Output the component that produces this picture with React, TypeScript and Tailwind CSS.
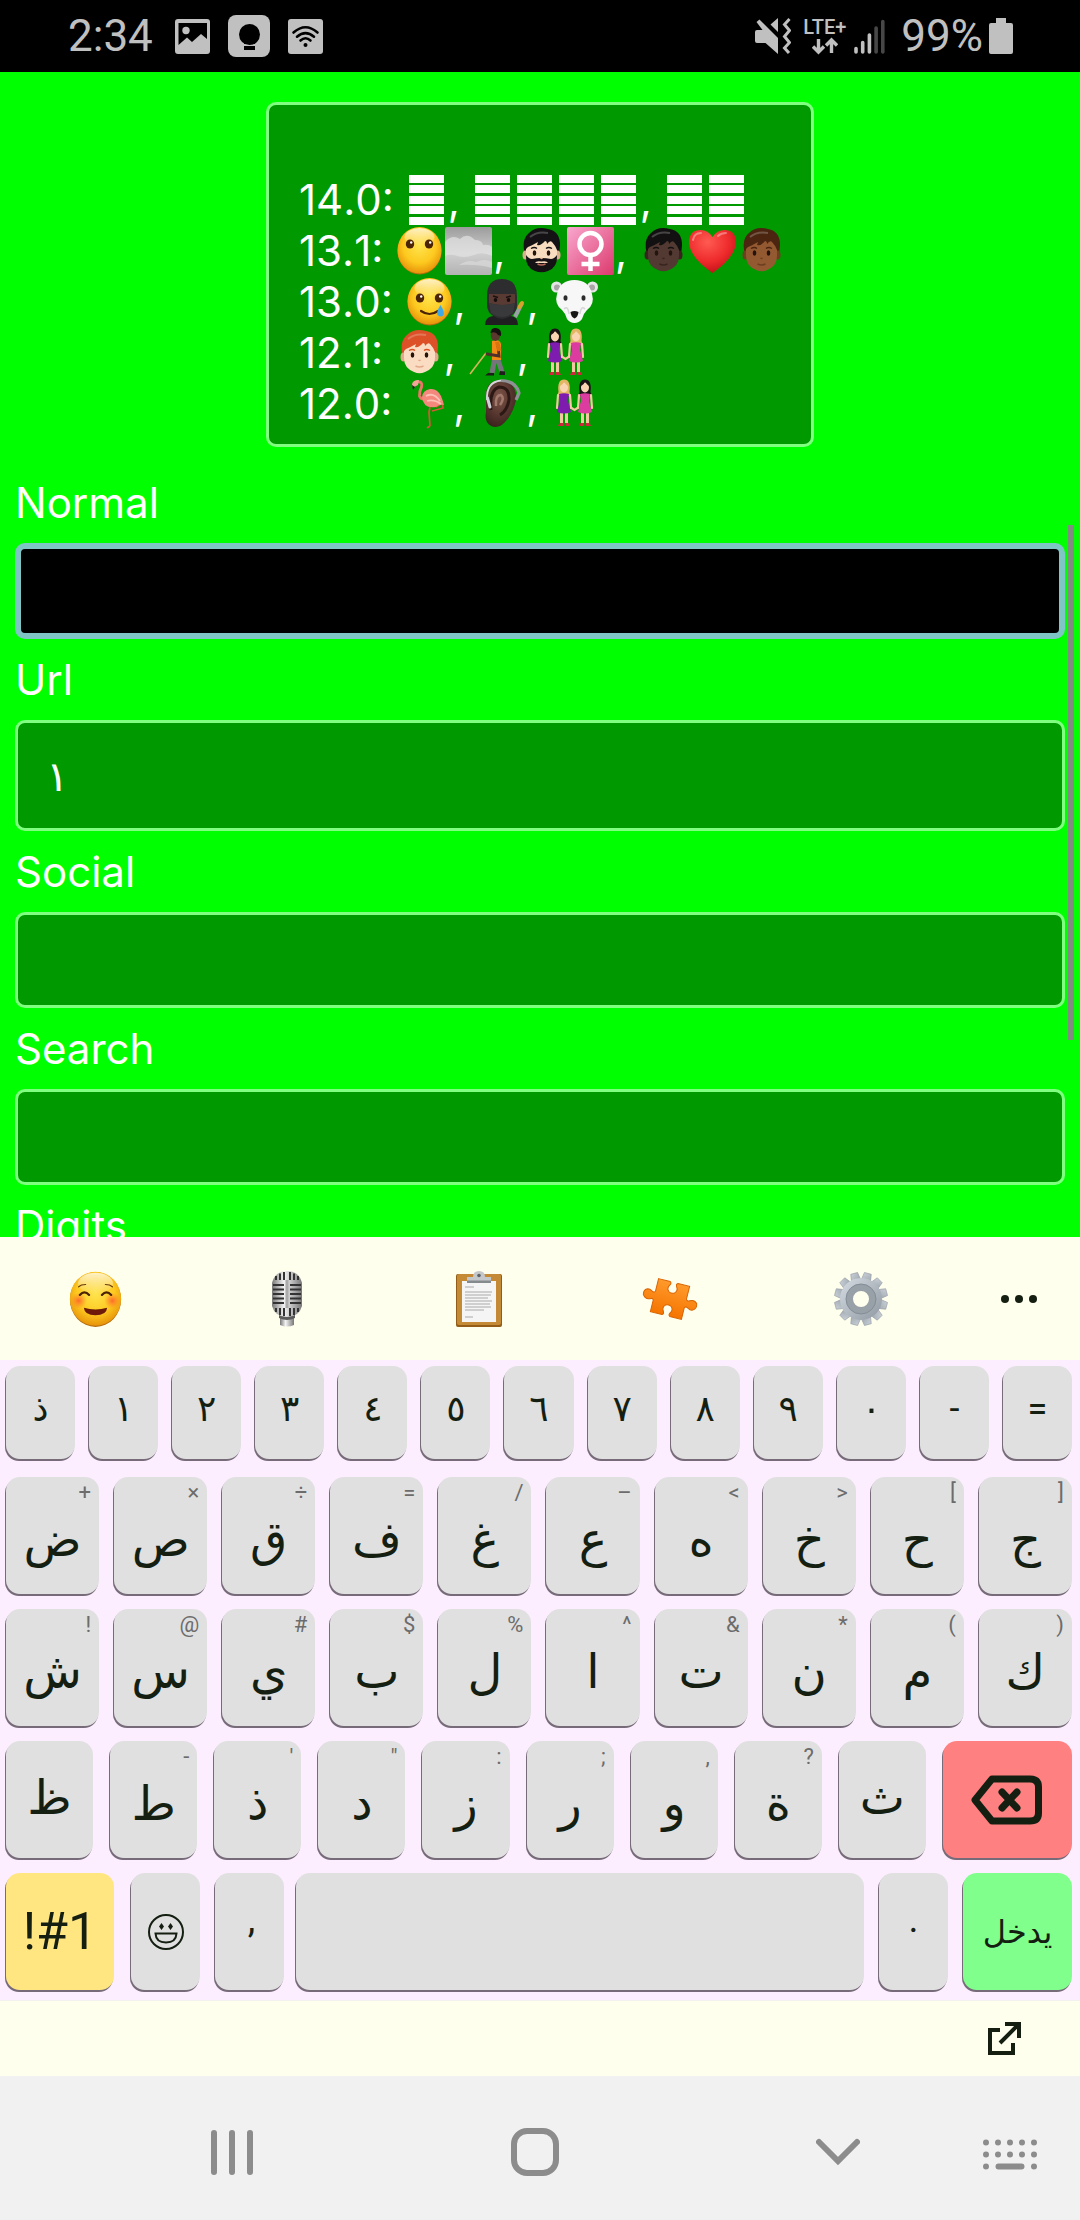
import React from "react";

const INK = "#141f12";

/* ---------- status bar ---------- */

function StatusBar() {
  return (
    <header className="flex h-[72px] shrink-0 items-center bg-black pr-[67px] pl-[68px] font-[Roboto,sans-serif] text-[44px] leading-[44px] text-[#c0c0c0]">
      <span>2:34</span>
      <div className="ml-[22px] flex items-center gap-[18px]">
        <svg className="h-[35px] w-[35px]" viewBox="0 0 35 35" aria-label="Picture">
          <path fill="currentColor" fillRule="evenodd" d="M3 0H32a3 3 0 0 1 3 3V32a3 3 0 0 1-3 3H3a3 3 0 0 1-3-3V3a3 3 0 0 1 3-3ZM3.500 4V26L12 18.500L17 23L26 15L32 20V4Z" />
          <circle cx="11" cy="11.500" r="3.700" fill="currentColor" />
        </svg>
        <svg className="h-[42px] w-[42px]" viewBox="0 0 42 42" aria-label="Bulb">
          <rect width="42" height="42" rx="8" fill="currentColor" />
          <circle cx="21.500" cy="19.500" r="10.500" fill="#000" />
          <path d="M16 27H27V29H16ZM16 31H27V35H16Z" fill="#000" />
        </svg>
        <svg className="h-[35px] w-[35px]" viewBox="0 0 35 35" aria-label="Wi-Fi">
          <rect width="35" height="35" rx="3" fill="currentColor" />
          <g fill="none" stroke="#000" strokeWidth="2.600" strokeLinecap="round">
            <path d="M5.500 13.500Q17.500 3 29.500 13.500" />
            <path d="M9 17.700Q17.500 10.500 26 17.700" />
            <path d="M12.500 21.500Q17.500 17 22.500 21.500" />
          </g>
          <circle cx="17.500" cy="26" r="2" fill="#000" />
        </svg>
      </div>
      <div className="ml-auto flex items-center">
        <svg className="h-9 w-9" viewBox="0 0 36 36" aria-label="Vibrate">
          <path d="M2 12H7.500L1.500 4L4.500 1.500L23 20V36L10.500 25H2a2 2 0 0 1-2-2V14a2 2 0 0 1 2-2ZM23 0V14L15.500 6.500Z" fill="currentColor" />
          <path d="M34.500 1L29.500 6.500L34.500 12.500L29.500 18.500L34.500 24.500L29.500 30L34 35" fill="none" stroke="currentColor" strokeWidth="3" />
        </svg>
        <div className="ml-3 flex flex-col items-center">
          <span className="text-xl leading-5 font-medium">LTE+</span>
          <svg className="h-[18px] w-[26px]" viewBox="0 0 26 18" aria-hidden="true">
            <path d="M6.500 2V15M1 9.500L6.500 15L12 9.500M19.500 16V3M14 8.500L19.500 3L25 8.500" fill="none" stroke="currentColor" strokeWidth="3.400" />
          </svg>
        </div>
        <svg className="ml-2 h-9 w-[31px]" viewBox="0 0 31 36" aria-label="Signal">
          <g stroke="currentColor" strokeWidth="3.600" strokeLinecap="round">
            <path d="M2 30.500V34M8.700 24.500V34M15.400 17V34" />
            <path d="M22.100 10V34M28.800 3.500V34" stroke="#474747" />
          </g>
        </svg>
        <span className="ml-4">99%</span>
        <svg className="ml-[6px] h-9 w-6" viewBox="0 0 24 36" aria-label="Battery">
          <path d="M7 0H17V5H22a2 2 0 0 1 2 2V34a2 2 0 0 1-2 2H2a2 2 0 0 1-2-2V7A2 2 0 0 1 2 5H7Z" fill="currentColor" />
        </svg>
      </div>
    </header>
  );
}

/* ---------- emoji drawings ---------- */

function Emoji({ label, children }: { label: string; children: React.ReactNode }) {
  return (
    <svg role="img" aria-label={label} className="h-[51px] w-[49px] shrink-0" viewBox="0 0 49 51">
      {children}
    </svg>
  );
}

function Defs() {
  return (
    <svg className="absolute h-0 w-0" aria-hidden="true">
      <defs>
        <radialGradient id="yellow" cx="50%" cy="40%" r="62%">
          <stop offset="0" stopColor="#ffe44f" />
          <stop offset="0.600" stopColor="#fdc91f" />
          <stop offset="1" stopColor="#e58e08" />
        </radialGradient>
        <linearGradient id="gloss" x1="0" y1="0" x2="0" y2="1">
          <stop offset="0" stopColor="#fff" stopOpacity="0.750" />
          <stop offset="1" stopColor="#fff" stopOpacity="0" />
        </linearGradient>
        <radialGradient id="cheek">
          <stop offset="0" stopColor="#ff5a2e" stopOpacity="0.850" />
          <stop offset="1" stopColor="#ff7a2e" stopOpacity="0" />
        </radialGradient>
        <linearGradient id="sky" x1="0" y1="0" x2="0" y2="1">
          <stop offset="0" stopColor="#9c9c9c" />
          <stop offset="0.550" stopColor="#cfcfcf" />
          <stop offset="1" stopColor="#b3b3b3" />
        </linearGradient>
        <linearGradient id="pink" x1="0" y1="0" x2="1" y2="1">
          <stop offset="0" stopColor="#f9a8cf" />
          <stop offset="1" stopColor="#dc3a6d" />
        </linearGradient>
        <radialGradient id="heart" cx="40%" cy="28%" r="75%">
          <stop offset="0" stopColor="#ff5b52" />
          <stop offset="0.600" stopColor="#ee2b2c" />
          <stop offset="1" stopColor="#c21019" />
        </radialGradient>
        <linearGradient id="steel" x1="0" y1="0" x2="1" y2="0">
          <stop offset="0" stopColor="#777" />
          <stop offset="0.400" stopColor="#f4f4f4" />
          <stop offset="1" stopColor="#777" />
        </linearGradient>
        <linearGradient id="orange" x1="0" y1="0" x2="0" y2="1">
          <stop offset="0" stopColor="#ff9a2b" />
          <stop offset="1" stopColor="#f57400" />
        </linearGradient>
        <linearGradient id="gear" x1="0" y1="0" x2="1" y2="1">
          <stop offset="0" stopColor="#ccd3da" />
          <stop offset="1" stopColor="#99a1aa" />
        </linearGradient>
        <radialGradient id="ear" cx="45%" cy="35%" r="65%">
          <stop offset="0" stopColor="#7d5348" />
          <stop offset="1" stopColor="#3d241f" />
        </radialGradient>
      </defs>
    </svg>
  );
}

function Ball() {
  return (
    <>
      <ellipse cx="24.500" cy="26" rx="22" ry="23.500" fill="#b46c0c" />
      <ellipse cx="24.500" cy="25.300" rx="22" ry="23.300" fill="url(#yellow)" />
      <ellipse cx="24.500" cy="12" rx="15" ry="9" fill="url(#gloss)" />
    </>
  );
}

function Eyes({ y }: { y: number }) {
  return (
    <>
      <ellipse cx="15" cy={y} rx="4.200" ry="4.500" fill="#4b2405" />
      <ellipse cx="34" cy={y} rx="4.200" ry="4.500" fill="#4b2405" />
      <circle cx="16.200" cy={y - 1.500} r="1.200" fill="#fff" />
      <circle cx="35.200" cy={y - 1.500} r="1.200" fill="#fff" />
    </>
  );
}

function Head({ label, skin, shade, hair, beard }: { label: string; skin: string; shade: string; hair: string; beard?: boolean }) {
  return (
    <Emoji label={label}>
      <path d="M8 30Q4 14 12 8Q19 1 31 4Q43 6 43 20Q43 26 41 31Z" fill={hair} />
      <ellipse cx="8.500" cy="30" rx="3" ry="4.500" fill={shade} />
      <ellipse cx="40.500" cy="30" rx="3" ry="4.500" fill={shade} />
      <path d="M9 22Q9 14 24.500 14Q40 14 40 22V31Q40 41 30 45Q24.500 47.500 19 45Q9 41 9 31Z" fill={skin} />
      {beard && (
        <path d="M9 30Q12 34 15 34Q24.500 32 34 34Q37 34 40 30Q41 42 31 46Q24.500 48.500 18 46Q8 42 9 30ZM18 38H31Q30 35.500 24.500 36.500Q19 35.500 18 38Z" fillRule="evenodd" fill={hair} />
      )}
      <path d="M8 25Q6 9 22 6Q39 4 42 17L40 25Q38 20 35 17Q33 15 30 19Q30 16 28 16Q24 21 20 20L21 17Q14 21 11 22Z" fill={hair} />
      <path d="M13 12Q20 6 31 8" stroke="#fff" strokeOpacity="0.220" strokeWidth="2" fill="none" />
      <ellipse cx="17.500" cy="28" rx="1.800" ry="2.800" fill="#24140e" />
      <ellipse cx="31.500" cy="28" rx="1.800" ry="2.800" fill="#24140e" />
      <path d="M14 23.500Q17.500 21.500 20 23.500M29 23.500Q31.500 21.500 35 23.500" stroke={hair} strokeWidth="1.300" fill="none" />
      <path d="M23.500 33Q24.500 34 25.500 33" stroke={shade} strokeWidth="1.300" fill="none" />
      <path d="M20.500 39Q24.500 41 28.500 39" stroke={beard ? "#b56a5c" : shade} strokeWidth="1.500" fill="none" />
    </Emoji>
  );
}

function Tofu() {
  return (
    <svg role="img" aria-label="Unsupported emoji" className="h-[51px] w-[42px] shrink-0" viewBox="0 0 42 51">
      <path d="M3 1H38V9H3ZM3 11H38V19H3ZM3 22H38V30H3ZM3 32H38V40H3ZM3 43H38V51H3Z" fill="#fff" />
    </svg>
  );
}

function Woman({ x, hair, dress }: { x: number; hair: string; dress: string }) {
  return (
    <g transform={`translate(${x} 0)`}>
      <path d="M-5.500 14Q-7 1.500 0 1.500Q7 1.500 5.500 14L7 18H-7Z" fill={hair} />
      <path d="M-6 17L-7 30M6 17L7 30" stroke="#f2c9a0" strokeWidth="2.200" strokeLinecap="round" />
      <path d="M-2.500 33V46M2.500 33V46" stroke="#f2c9a0" strokeWidth="3" />
      <ellipse cx="0" cy="9.500" rx="4" ry="5" fill="#f8d5b0" />
      <path d="M-4 8Q-1 7 0 3.500Q2 7 4 8Q4 3 0 3Q-4 3 -4 8Z" fill={hair} />
      <path d="M-5 16Q0 14.500 5 16L4 23L7 34Q0 37 -7 34L-4 23Z" fill={dress} />
      <path d="M-4.500 45H-1V48H-6ZM1 45H4.500L6 48H1Z" fill="#d3263c" />
    </g>
  );
}

function Couple({ swapped }: { swapped?: boolean }) {
  return (
    <Emoji label="Two women holding hands">
      <path d="M20 29L24.500 32L29 29" stroke="#f2c9a0" strokeWidth="2.200" fill="none" />
      <Woman x={14} hair={swapped ? "#e3b565" : "#191317"} dress="#7d1cae" />
      <Woman x={35} hair={swapped ? "#191317" : "#e3b565"} dress="#dc3ba0" />
    </Emoji>
  );
}

const faceNoMouth = (
  <Emoji label="Face without mouth">
    <Ball />
    <Eyes y={19} />
  </Emoji>
);

const fog = (
  <Emoji label="Fog">
    <rect x="1" y="2" width="47" height="48" rx="2" fill="url(#sky)" />
    <path d="M1 17Q8 9 16 14Q23 7 31 15Q38 15 39 20Q45 19 48 22V31Q38 26 30 30Q20 34 10 30Q5 29 1 31Z" fill="#e3e3e3" fillOpacity="0.700" />
    <path d="M15 40Q24 34 32 37Q41 33 48 37V43Q34 39 15 40Z" fill="#dadada" fillOpacity="0.700" />
  </Emoji>
);

const femaleSign = (
  <Emoji label="Female sign">
    <rect x="1" y="2" width="47" height="48" rx="2" fill="url(#pink)" />
    <ellipse cx="24.500" cy="19" rx="11" ry="11" fill="none" stroke="#fff" strokeWidth="4.500" />
    <path d="M24.500 30V46M15.500 39H33.500" stroke="#fff" strokeWidth="4.500" />
  </Emoji>
);

const heart = (
  <Emoji label="Red heart">
    <path d="M24.500 48Q1 32 1 16Q2 5 12.500 5Q20 5 24.500 12Q29 5 36.500 5Q47 5 48 16Q48 32 24.500 48Z" fill="url(#heart)" />
    <path d="M5 15Q6 8 13 8M30 11Q33 8 38 8" stroke="#fff" strokeOpacity="0.350" strokeWidth="2" fill="none" strokeLinecap="round" />
  </Emoji>
);

const tearSmile = (
  <Emoji label="Smiling face with tear">
    <Ball />
    <Eyes y={22} />
    <path d="M16 35Q24.500 41 33 35" stroke="#4b2405" strokeWidth="2.200" fill="none" strokeLinecap="round" />
    <path d="M35.500 29Q40 36 38.500 39Q36 42 32.500 39Q31 36 35.500 29Z" fill="#3fa9e8" />
  </Emoji>
);

const ninja = (
  <Emoji label="Ninja">
    <path d="M38 41L45 27" stroke="#9aa0a4" strokeWidth="4" />
    <path d="M42.500 31L45 27" stroke="#d6a22a" strokeWidth="4" strokeLinecap="round" />
    <path d="M8 49Q8 41 16 40H34Q41 41 41 49Z" fill="#1f1f21" />
    <path d="M10 20Q10 3 25 3Q40 3 40 20V31Q38 41 25 43Q12 41 10 31Z" fill="#2d2d30" />
    <path d="M12 18H38V27Q25 31 12 27Z" fill="#5a3b34" />
    <path d="M12 27Q25 31 38 27L36 37Q25 45 14 37Z" fill="#39393c" />
    <path d="M16 20L21 21.500M34 20L29 21.500" stroke="#1a1110" strokeWidth="1.500" />
    <ellipse cx="18.500" cy="24" rx="1.800" ry="2" fill="#140d0c" />
    <ellipse cx="31.500" cy="24" rx="1.800" ry="2" fill="#140d0c" />
  </Emoji>
);

const polarBear = (
  <Emoji label="Polar bear">
    <circle cx="6.500" cy="11" r="5.500" fill="#e6e6e6" />
    <circle cx="42.500" cy="11" r="5.500" fill="#e6e6e6" />
    <circle cx="7" cy="11.500" r="3" fill="#a9a4a6" />
    <circle cx="42" cy="11.500" r="3" fill="#a9a4a6" />
    <path d="M24.500 4Q39 4 42 18Q45 28 37 34Q33 38 32 43Q29 47 24.500 47Q20 47 17 43Q16 38 12 34Q4 28 7 18Q10 4 24.500 4Z" fill="#f7f7f7" />
    <path d="M14 33Q18 29 19 38M35 33Q31 29 30 38" stroke="#d6d6d6" strokeWidth="1.500" fill="none" />
    <ellipse cx="15.500" cy="22" rx="2" ry="2.800" fill="#2c2c2c" />
    <ellipse cx="33.500" cy="22" rx="2" ry="2.800" fill="#2c2c2c" />
    <path d="M20.500 36Q24.500 34 28.500 36Q28 41 24.500 42.500Q21 41 20.500 36Z" fill="#171717" />
  </Emoji>
);

const caneWalker = (
  <Emoji label="Person with white cane">
    <path d="M2 47L18 26" stroke="#d4b75a" strokeWidth="1.600" />
    <path d="M27 30L24 46M29 30L34 45" stroke="#75757b" strokeWidth="5" />
    <path d="M20 46H26V48.500H17ZM32 44L37 44.500V48H31Z" fill="#211c1c" />
    <path d="M24 14Q31 11 33 17L33 33H24Z" fill="#f28a17" />
    <path d="M30 18L31 29L19 27" stroke="#4f3129" strokeWidth="2.800" fill="none" strokeLinecap="round" />
    <path d="M29 15L31.500 24" stroke="#d9750c" strokeWidth="4" />
    <ellipse cx="27.500" cy="8" rx="4.800" ry="6" fill="#5a382e" />
    <path d="M22.500 6Q23 0.500 28 1Q34 1.500 33 9L30 8Q28 4 22.500 6Z" fill="#15110f" />
  </Emoji>
);

const flamingo = (
  <Emoji label="Flamingo">
    <path d="M26 29L25 34L26 48M26 48L23 50M32 29L38 25L39 30L28 33" stroke="#cf5a34" strokeWidth="1.700" fill="none" />
    <path d="M13 4Q19 3 17.500 9Q15 14 15.500 18Q16 21 21 21" stroke="#ef7468" strokeWidth="2.800" fill="none" strokeLinecap="round" />
    <path d="M15 2Q8 2 8 7L9 9.500L14 7Z" fill="#f4a398" />
    <path d="M8 7L9 12L11 9Z" fill="#222" />
    <path d="M18 19Q19 12 26 11Q33 10 37 18Q39 23 40 27Q35 26 32 29Q19 31 18 19Z" fill="#f4887c" />
    <path d="M22 18Q30 14 36 23M23 23Q30 21 37 26" stroke="#fbc0b6" strokeWidth="1.800" fill="none" />
  </Emoji>
);

const hearingAid = (
  <Emoji label="Ear with hearing aid">
    <path d="M9 16Q10 2 24 2Q40 4 39 22Q36 36 28 44Q22 51 14 48Q7 44 9 34Z" fill="url(#ear)" />
    <path d="M14 32Q12 12 22 9Q33 9 32 22Q30 33 23 37" stroke="#2c1815" strokeWidth="3" fill="none" />
    <path d="M19 28Q18 17 24 17Q28 20 23 27" stroke="#a27a6c" strokeWidth="2.500" fill="none" />
    <path d="M10 22Q9 4 24 2.500" stroke="#d5d8db" strokeWidth="1.800" fill="none" />
    <path d="M24 2.500Q39 3 42 15L39 22" stroke="#8d9094" strokeWidth="3.200" fill="none" />
    <path d="M10.500 20L13 29" stroke="#cfd2d5" strokeWidth="3" strokeLinecap="round" />
  </Emoji>
);

/* ---------- form ---------- */

function VersionLine({ version, groups }: { version: string; groups: React.ReactNode[][] }) {
  return (
    <div className="flex h-[51px] items-center whitespace-pre">
      <span>{version + ": "}</span>
      {groups.map((group, i) => (
        <React.Fragment key={i}>
          {group.map((g, j) => (
            <React.Fragment key={j}>{g}</React.Fragment>
          ))}
          {i < groups.length - 1 && <span>{", "}</span>}
        </React.Fragment>
      ))}
    </div>
  );
}

function Field({ label, value, look }: { label: string; value?: string; look: string }) {
  const id = "field-" + label.toLowerCase();
  return (
    <div className="flex flex-col">
      <label htmlFor={id} className="h-[81px] pt-[15px] leading-[51px]">
        {label}
      </label>
      <input id={id} type="text" defaultValue={value} className={"w-full rounded-[10px] px-7 text-white outline-none " + look} />
    </div>
  );
}

const plain = "h-24 border-3 border-[#80ff80] bg-[#009900]";

function Form() {
  return (
    <main className="relative min-h-0 flex-1 overflow-hidden bg-[#00ff00] px-[15px] pt-[30px] font-[Inter,'DejaVu_Sans',sans-serif] text-[42px] leading-[51px] text-white">
      <div className="mx-auto mb-[15px] w-fit rounded-[10px] border-3 border-[#80ff80] bg-[#009900] pt-[69px] pr-[25px] pb-[15px] pl-[30px] [font-kerning:none]">
        <VersionLine version="14.0" groups={[[<Tofu />], [<Tofu />, <Tofu />, <Tofu />, <Tofu />], [<Tofu />, <Tofu />]]} />
        <VersionLine
          version="13.1"
          groups={[
            [faceNoMouth, fog],
            [<Head label="Bearded person" skin="#f8dcc0" shade="#dcae90" hair="#141214" beard />, femaleSign],
            [
              <Head label="Person, dark skin" skin="#523932" shade="#382520" hair="#121011" />,
              heart,
              <Head label="Person, brown skin" skin="#935931" shade="#6e3f20" hair="#4b2510" />,
            ],
          ]}
        />
        <VersionLine version="13.0" groups={[[tearSmile], [ninja], [polarBear]]} />
        <VersionLine
          version="12.1"
          groups={[[<Head label="Person, red hair" skin="#fadcc2" shade="#e3a98a" hair="#dd5128" />], [caneWalker], [<Couple />]]}
        />
        <VersionLine version="12.0" groups={[[flamingo], [hearingAid], [<Couple swapped />]]} />
      </div>
      <Field label="Normal" look="h-24 border-6 border-[#80c5c5] bg-black" />
      <Field label="Url" value="١" look="h-[111px] border-3 border-[#80ff80] bg-[#009900]" />
      <Field label="Social" look={plain} />
      <Field label="Search" look={plain} />
      <Field label="Digits" look={plain} />
      <div className="absolute top-[453px] right-[6px] h-[515px] w-[6px] bg-[#7f8c7f]" />
    </main>
  );
}

/* ---------- keyboard ---------- */

const teeth = Array.from({ length: 12 }, (_, i) => 15 + i * 30);

function Toolbar() {
  const cell = "flex flex-1 items-center justify-center";
  return (
    <div className="flex h-[123px] bg-[#ffffee]">
      <button className={cell} aria-label="Emoji">
        <svg className="h-[60px] w-[57px]" viewBox="0 0 49 51">
          <Ball />
          <circle cx="10" cy="27" r="7" fill="url(#cheek)" />
          <circle cx="39" cy="27" r="7" fill="url(#cheek)" />
          <path d="M11 22Q15 17.500 19 22M30 22Q34 17.500 38 22" stroke="#4b2405" strokeWidth="1.900" fill="none" strokeLinecap="round" />
          <path d="M10 15Q12 13 16 13M39 15Q37 13 33 13" stroke="#6b3a08" strokeWidth="1" fill="none" strokeLinecap="round" />
          <path d="M14.500 33Q24.500 36 34.500 33Q34 39.500 24.500 39.500Q15 39.500 14.500 33Z" fill="#6d1a0a" />
        </svg>
      </button>
      <button className={cell} aria-label="Microphone">
        <svg className="h-14 w-8" viewBox="0 0 32 56">
          <path d="M9 44H23V54Q16 57 9 54Z" fill="url(#steel)" />
          <path d="M8 42Q16 49 24 42V47Q16 51 8 47Z" fill="#5b5b5b" />
          <path d="M1 12Q4 0 16 0Q28 0 31 12V35Q28 46 16 46Q4 46 1 35Z" fill="url(#steel)" />
          <path d="M2 14H13M2 18.500H13M2 23H13M2 27.500H13M2 32H13M19 14H30M19 18.500H30M19 23H30M19 27.500H30M19 32H30" stroke="#333" strokeWidth="1.800" />
          <path d="M5 5V9M9 2.500V9M13 1V9M19 1V9M23 2.500V9M27 5V9M5 37V41M9 37V44M13 37V45M19 37V45M23 37V44M27 37V41" stroke="#333" strokeWidth="2" />
          <path d="M16 9V37" stroke="#ababab" strokeWidth="3" />
        </svg>
      </button>
      <button className={cell} aria-label="Clipboard">
        <svg className="h-14 w-[46px]" viewBox="0 0 46 56">
          <rect y="3" width="46" height="53" rx="2" fill="#935c17" />
          <rect x="1" y="3" width="44" height="51" rx="2" fill="#c58a35" />
          <path d="M6 10H40V51H6Z" fill="#f5f5f5" />
          <path d="M9 16H18M9 21H36M9 24H35M9 27H32M9 30H36M9 33H34M9 36H35M9 39H28M9 46H17" stroke="#a9a9a9" strokeWidth="1" />
          <path d="M11 6H17Q17 0 23 0Q29 0 29 6H35V12H11Z" fill="#c5c8cb" />
          <path d="M11 9.500H35V12H11Z" fill="#858a8e" />
          <circle cx="23" cy="4.500" r="1.800" fill="#5f6468" />
        </svg>
      </button>
      <button className={cell} aria-label="Puzzle">
        <svg className="h-[46px] w-14" viewBox="0 0 56 46">
          <path
            transform="rotate(14 28 23)"
            d="M12 6H24Q26 7 24.500 9.500Q22 13 25 16Q28 18 31 16Q34 13 31.500 9.500Q30 7 32 6H44V19Q45 21.500 47.500 20Q52 17.500 55 21Q57 26 52 28.500Q50 29 47.500 27.500Q45 26 44 28V40H32Q30 39 31.500 36.500Q34 33 31 30Q28 28 25 30Q22 33 24.500 36.500Q26 39 24 40H12V28Q11 26 8.500 27.500Q4 29.500 1 25Q0 20 4 18.500Q6 18 8.500 19.500Q11 21 12 19Z"
            fill="url(#orange)"
            stroke="#d86300"
            strokeWidth="1"
          />
        </svg>
      </button>
      <button className={cell} aria-label="Settings">
        <svg className="h-[54px] w-[54px]" viewBox="0 0 54 54">
          {teeth.map((a) => (
            <path key={a} d="M22 10L23.500 0.500H30.500L32 10Z" fill="url(#gear)" stroke="#929aa3" strokeWidth="0.600" transform={`rotate(${a} 27 27)`} />
          ))}
          <circle cx="27" cy="27" r="15" fill="none" stroke="url(#gear)" strokeWidth="12" />
          <circle cx="27" cy="27" r="11.500" fill="none" stroke="#98a0a8" strokeWidth="7" />
          <circle cx="27" cy="27" r="15" fill="none" stroke="#848d96" strokeWidth="1" />
        </svg>
      </button>
      <button className="flex w-[123px] items-center justify-center" aria-label="More">
        <svg className="h-2 w-9" viewBox="0 0 36 8" fill={INK}>
          <circle cx="4" cy="4" r="4" />
          <circle cx="18" cy="4" r="4" />
          <circle cx="32" cy="4" r="4" />
        </svg>
      </button>
    </div>
  );
}

const base =
  "relative flex items-center justify-center rounded-[14px] font-[Roboto,'DejaVu_Sans',sans-serif] text-[#141f12] shadow-[-1px_2px_0_#776b7a] ";

function LetterKey({ letter, hint }: { letter: string; hint?: string }) {
  return (
    <button className={base + "h-[117px] min-w-0 flex-1 bg-[#e0e0e0] text-[48px] leading-[60px] " + (hint ? "pt-2" : "pb-1")}>
      {letter}
      {hint && <span className="absolute top-[5px] right-2 text-[22px] leading-[22px] text-[#6c6c6c]">{hint}</span>}
    </button>
  );
}

const numbers = ["ذ", "١", "٢", "٣", "٤", "٥", "٦", "٧", "٨", "٩", "٠", "-", "="];
const rowTwo = [["ض", "+"], ["ص", "×"], ["ق", "÷"], ["ف", "="], ["غ", "/"], ["ع", "–"], ["ه", "<"], ["خ", ">"], ["ح", "["], ["ج", "]"]];
const rowThree = [["ش", "!"], ["س", "@"], ["ي", "#"], ["ب", "$"], ["ل", "%"], ["ا", "^"], ["ت", "&"], ["ن", "*"], ["م", "("], ["ك", ")"]];
const rowFour = [["ظ", ""], ["ط", "-"], ["ذ", "'"], ["د", "\""], ["ز", ":"], ["ر", ";"], ["و", ","], ["ة", "?"], ["ث", ""]];

function Keyboard() {
  return (
    <div className="flex flex-col gap-[15px] bg-[#fceeff] pt-[6px] pr-2 pb-[10px] pl-[6px]">
      <div className="mb-[3px] flex gap-[14px]">
        {numbers.map((n) => (
          <button key={n} className={base + "h-[93px] min-w-0 flex-1 bg-[#e0e0e0] pb-2 text-[36px]"}>
            {n}
          </button>
        ))}
      </div>
      <div className="flex gap-[15px]">
        {rowTwo.map(([l, h]) => (
          <LetterKey key={l} letter={l} hint={h} />
        ))}
      </div>
      <div className="flex gap-[15px]">
        {rowThree.map(([l, h]) => (
          <LetterKey key={l} letter={l} hint={h} />
        ))}
      </div>
      <div className="flex gap-[17px]">
        {rowFour.map(([l, h]) => (
          <LetterKey key={l} letter={l} hint={h} />
        ))}
        <button className={base + "h-[117px] w-[129px] bg-[#ff8080]"} aria-label="Backspace">
          <svg className="h-[50px] w-[72px]" viewBox="0 0 72 50" fill="none" stroke={INK} strokeWidth="7" strokeLinejoin="round" strokeLinecap="round">
            <path d="M21 4H59Q67.500 4 67.500 12V38Q67.500 46 59 46H21L4 25Z" />
            <path d="M31 17L46 33M46 17L31 33" />
          </svg>
        </button>
      </div>
      <div className="flex gap-[15px]">
        <button className={base + "h-[117px] w-[108px] bg-[#ffe680] text-[52px]"}>!#1</button>
        <div className="flex gap-[15px] pl-[2px]">
          <button className={base + "h-[117px] w-[69px] bg-[#e0e0e0]"} aria-label="Emoji panel">
            <svg className="h-9 w-9" viewBox="0 0 36 36" fill="none" stroke={INK} strokeWidth="2">
              <circle cx="18" cy="18" r="17" />
              <path d="M7.500 19.500H28.500Q28 28.500 18 28.500Q8 28.500 7.500 19.500Z" />
              <path d="M13.500 9L16 12.500L13.500 16L11 12.500ZM22.500 9L25 12.500L22.500 16L20 12.500Z" fill={INK} stroke="none" />
            </svg>
          </button>
          <button className={base + "h-[117px] w-[69px] bg-[#e0e0e0] pb-6 pl-1 text-[38px]"}>,</button>
        </div>
        <button className={base + "-ml-[3px] h-[117px] min-w-0 flex-1 bg-[#e0e0e0]"} aria-label="Space" />
        <button className={base + "h-[117px] w-[69px] bg-[#e0e0e0] pb-6 text-[38px]"}>.</button>
        <button className={base + "h-[117px] w-[109px] bg-[#80ff8c] text-[32px]"}>يدخل</button>
      </div>
    </div>
  );
}

function NavBar() {
  return (
    <nav className="flex h-36 shrink-0 items-center bg-[#f1f1f1] pt-2 pr-[43px] pl-[211px] text-[#8c8c8c]">
      <button aria-label="Recents">
        <svg className="h-[45px] w-[42px]" viewBox="0 0 42 45" stroke="currentColor" strokeWidth="6" strokeLinecap="round">
          <path d="M3 3V42M21 3V42M39 3V42" />
        </svg>
      </button>
      <div className="grow-[21]" />
      <button aria-label="Home">
        <svg className="h-12 w-12" viewBox="0 0 48 48" fill="none" stroke="currentColor" strokeWidth="6">
          <rect x="3" y="3" width="42" height="42" rx="13" />
        </svg>
      </button>
      <div className="grow-[21]" />
      <button aria-label="Hide keyboard">
        <svg className="h-7 w-11" viewBox="0 0 44 28" fill="none" stroke="currentColor" strokeWidth="6" strokeLinecap="round">
          <path d="M3 4L22 23L41 4" />
        </svg>
      </button>
      <div className="grow-[10]" />
      <button aria-label="Choose keyboard" className="pt-1">
        <svg className="h-[31px] w-[54px]" viewBox="0 0 54 31" stroke="currentColor" strokeWidth="6" strokeLinecap="round">
          <path d="M3 3.500H3M15 3.500H15M27 3.500H27M39 3.500H39M51 3.500H51M3 15.500H3M15 15.500H15M27 15.500H27M39 15.500H39M51 15.500H51M3 27.500H3M15.500 27.500H38.500M51 27.500H51" />
        </svg>
      </button>
    </nav>
  );
}

export default function App() {
  return (
    <div className="flex h-screen flex-col">
      <Defs />
      <StatusBar />
      <Form />
      <section className="shrink-0">
        <Toolbar />
        <Keyboard />
        <div className="flex h-19 items-center justify-end border-t border-[#f3f1f0] bg-[#ffffee] pr-[59px]">
          <button aria-label="Open in window">
            <svg className="h-[33px] w-[33px]" viewBox="0 0 33 33" fill="none" stroke={INK} strokeWidth="4">
              <path d="M12 8H2V31H25V21" />
              <path d="M17 2H31V16M12 21L31 2" />
            </svg>
          </button>
        </div>
      </section>
      <NavBar />
    </div>
  );
}
